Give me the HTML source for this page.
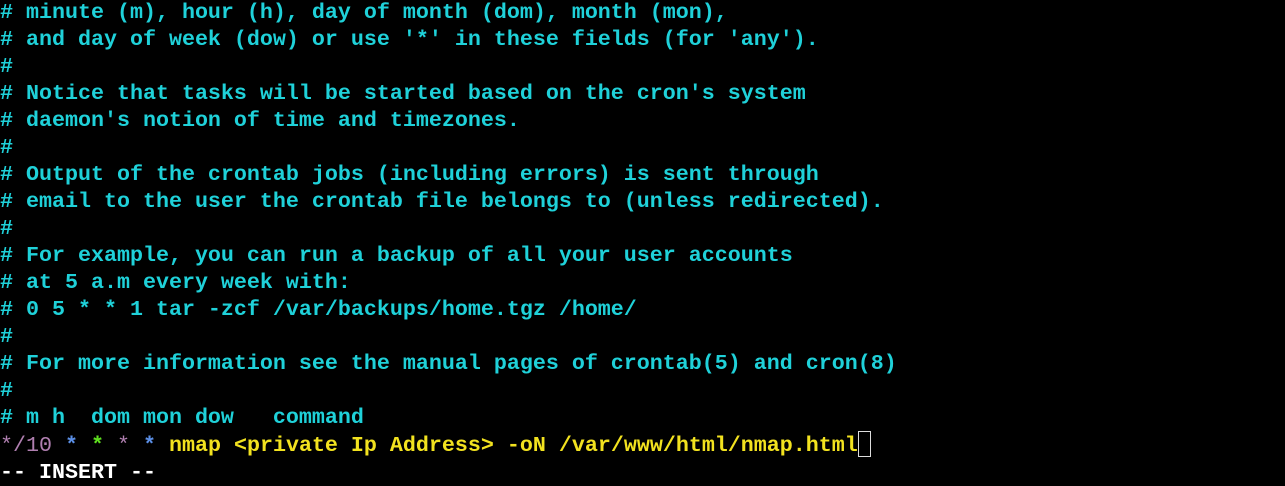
<!DOCTYPE html>
<html><head><style>
html,body{margin:0;padding:0;background:#000;width:1285px;height:481px;overflow:hidden}
pre{margin:0;position:absolute;left:0;top:-1px;font-family:"Liberation Mono",monospace;font-weight:bold;font-size:21.67px;line-height:27px;color:#1fd1d9;white-space:pre}
.p{color:#b07fb0;font-weight:normal}.b{color:#5b8fe6}.g{color:#5fe01f}.y{color:#f2e21f}.w{color:#fff}
.c{display:inline-block;width:11px;height:24px;border:1px solid #ddd;vertical-align:-6px;margin-left:0}
</style></head><body><pre># minute (m), hour (h), day of month (dom), month (mon),
# and day of week (dow) or use '*' in these fields (for 'any').
#
# Notice that tasks will be started based on the cron's system
# daemon's notion of time and timezones.
#
# Output of the crontab jobs (including errors) is sent through
# email to the user the crontab file belongs to (unless redirected).
#
# For example, you can run a backup of all your user accounts
# at 5 a.m every week with:
# 0 5 * * 1 tar -zcf /var/backups/home.tgz /home/
#
# For more information see the manual pages of crontab(5) and cron(8)
#
# m h  dom mon dow   command
<span class="p">*/10</span> <span class="b">*</span> <span class="g">*</span> <span class="p">*</span> <span class="b">*</span> <span class="y">nmap &lt;private Ip Address&gt; -oN /var/www/html/nmap.html</span><span class="c"></span>
<span class="w">-- INSERT --</span></pre></body></html>
